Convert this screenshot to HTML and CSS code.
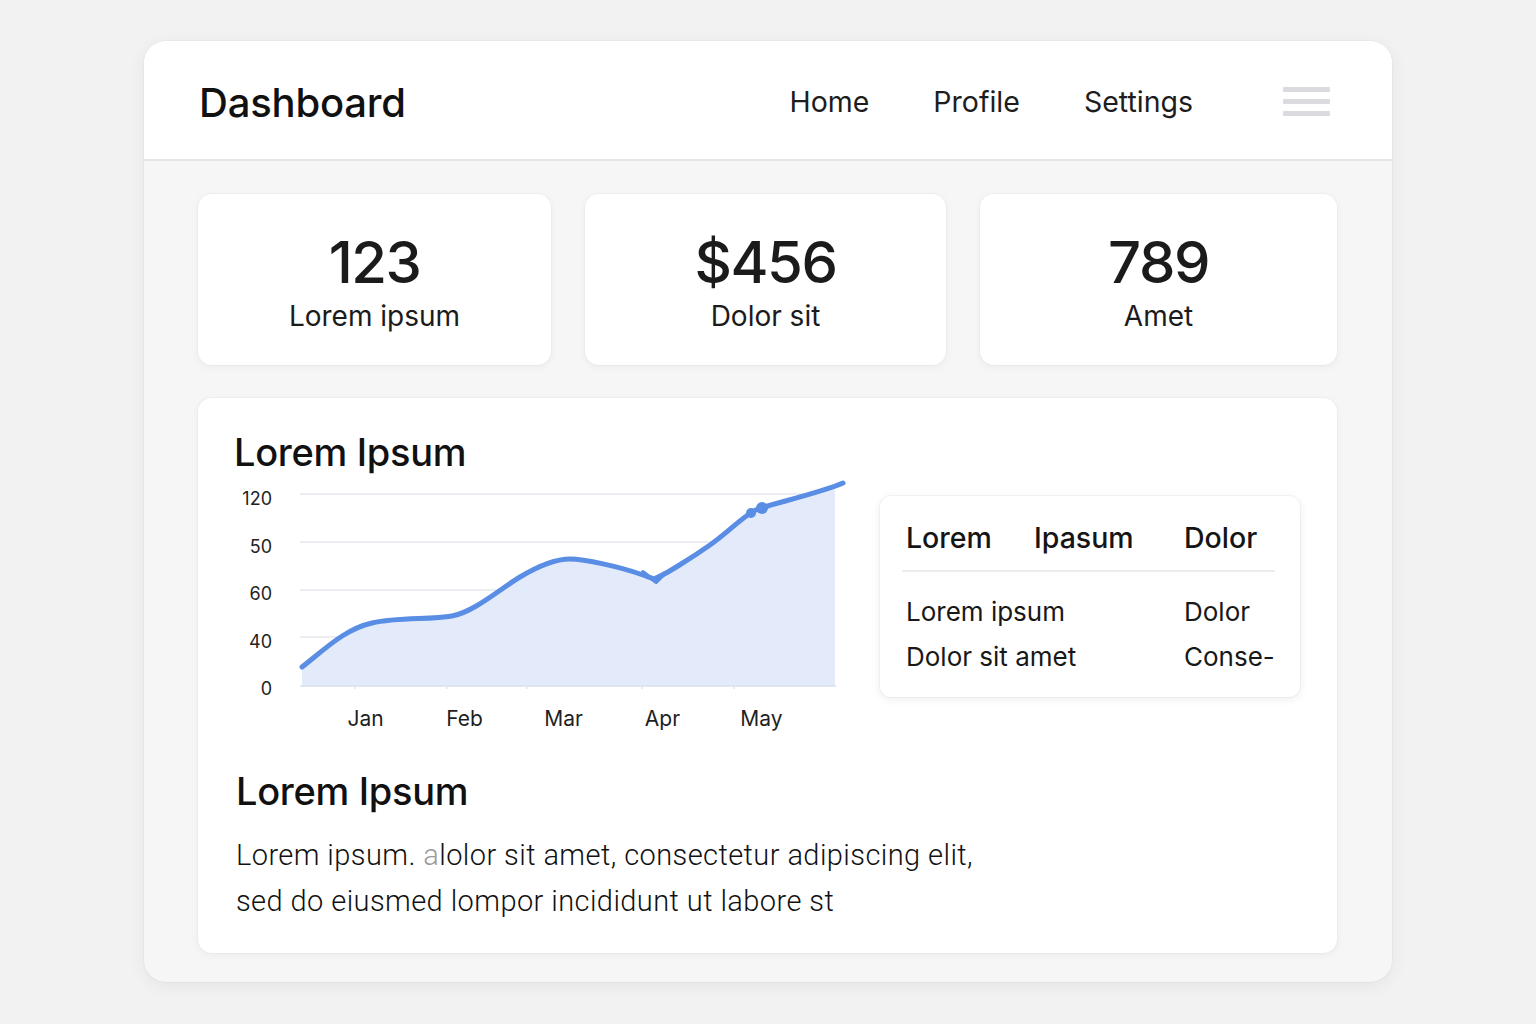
FILE: index.html
```html
<!DOCTYPE html>
<html lang="en">
<head>
<meta charset="utf-8">
<title>Dashboard</title>
<link rel="stylesheet" href="styles.css">
</head>
<body>
<div class="app">
  <header class="topbar">
    <h1 class="brand">Dashboard</h1>
    <nav class="nav">
      <a class="nav-link">Home</a>
      <a class="nav-link">Profile</a>
      <a class="nav-link">Settings</a>
      <span class="burger"><i></i><i></i><i></i></span>
    </nav>
  </header>
  <main class="content">
    <section class="stats">
      <div class="stat"><div class="stat-num">123</div><div class="stat-label">Lorem ipsum</div></div>
      <div class="stat"><div class="stat-num">$456</div><div class="stat-label">Dolor sit</div></div>
      <div class="stat"><div class="stat-num">789</div><div class="stat-label">Amet</div></div>
    </section>
    <section class="panel">
      <div class="panel-top">
        <div class="chart-block">
          <h2 class="panel-title">Lorem Ipsum</h2>
          <div class="chart">
            <div class="y-axis">
              <span>120</span><span>50</span><span>60</span><span>40</span><span>0</span>
            </div>
            <div class="plot">
              <svg class="plot-svg" width="552" height="212" viewBox="296 478 552 212">
                <g stroke="#e4e7ee" stroke-width="1.5">
                  <line x1="300" y1="495" x2="835" y2="495"/>
                  <line x1="300" y1="543" x2="835" y2="543"/>
                  <line x1="300" y1="591" x2="835" y2="591"/>
                  <line x1="300" y1="638" x2="835" y2="638"/>
                </g>
                <path d="M302,668 C325,650 345,630 372,624 S430,621 452,617 S500,590 520,578 S555,560 570,560 S620,568 640,575 S652,580 658,578 S690,560 710,546 S745,515 758,510 S820,494 843,484 L835,486 L835,687 L302,687 Z" fill="#e3ebfb"/>
                <line x1="300" y1="687" x2="836" y2="687" stroke="#d9e0ee" stroke-width="1.5"/>
                <g stroke="#e2e6ee" stroke-width="1.5">
                  <line x1="355" y1="687" x2="355" y2="691"/>
                  <line x1="447" y1="687" x2="447" y2="691"/>
                  <line x1="527" y1="687" x2="527" y2="691"/>
                  <line x1="642" y1="687" x2="642" y2="691"/>
                  <line x1="734" y1="687" x2="734" y2="691"/>
                </g>
                <path d="M302,668 C325,650 345,630 372,624 S430,621 452,617 S500,590 520,578 S555,560 570,560 S620,568 640,575 S652,580 658,578 S690,560 710,546 S745,515 758,510 S820,494 843,484" fill="none" stroke="#5a8de4" stroke-width="5" stroke-linecap="round" stroke-linejoin="round"/>
                <circle cx="762" cy="509" r="6" fill="#5a8de4"/>
                <circle cx="751" cy="514" r="5" fill="#5a8de4"/>
                <path d="M643,573 L656,583 L665,574" fill="none" stroke="#5a8de4" stroke-width="4" stroke-linecap="round" stroke-linejoin="round"/>
              </svg>
              <div class="x-axis">
                <span>Jan</span><span>Feb</span><span>Mar</span><span>Apr</span><span>May</span>
              </div>
            </div>
          </div>
        </div>
        <div class="table-card">
          <div class="t-head">
            <span>Lorem</span><span>Ipasum</span><span>Dolor</span>
          </div>
          <div class="t-row"><span class="t-wide">Lorem ipsum</span><span>Dolor</span></div>
          <div class="t-row"><span class="t-wide">Dolor sit amet</span><span>Conse-</span></div>
        </div>
      </div>
      <h2 class="panel-title second">Lorem Ipsum</h2>
      <p class="body-text">Lorem ipsum. <span class="faint">a</span>lolor sit amet, consectetur adipiscing elit,<br>sed do eiusmed lompor incididunt ut labore st</p>
    </section>
  </main>
</div>
</body>
</html>
```

FILE: styles.css
```css
* { box-sizing: border-box; }
html, body { margin: 0; padding: 0; }
body {
  background: #f2f2f3;
  font-family: Inter, "Noto Sans", "Liberation Sans", sans-serif;
  color: #161616;
  width: 1536px;
  height: 1024px;
  overflow: hidden;
}
.app {
  width: 1248px;
  height: 941px;
  margin: 41px auto 0;
  background: #f6f6f7;
  border-radius: 22px;
  box-shadow: 0 4px 18px rgba(0,0,0,0.06), 0 0 0 1px rgba(0,0,0,0.025);
  overflow: hidden;
  display: flex;
  flex-direction: column;
}
.topbar {
  height: 120px;
  flex: none;
  background: #fff;
  border-bottom: 2px solid #e6e6e8;
  display: flex;
  align-items: center;
  justify-content: space-between;
  padding: 0 62px 0 55px;
}
.brand {
  margin: 0;
  font-size: 40px;
  font-weight: 500;
  letter-spacing: -0.2px;
  color: #111;
  padding-top: 5px;
}
.nav {
  display: flex;
  align-items: center;
}
.nav-link {
  font-size: 28.5px;
  color: #1d1d1d;
  margin-right: 64px;
  padding-top: 2px;
}
.nav-link:nth-child(3) { margin-right: 90px; }
.burger {
  display: flex;
  flex-direction: column;
  gap: 7px;
  width: 47px;
  margin-top: 2px;
}
.burger i {
  display: block;
  height: 5px;
  background: #dadadf;
  border-radius: 1px;
}
.content {
  flex: 1;
  padding: 33px 55px 29px 54px;
  display: flex;
  flex-direction: column;
  gap: 33px;
}
.stats {
  display: grid;
  grid-template-columns: 353px 361px 357px;
  gap: 34px;
}
.stat {
  height: 171px;
  background: #fff;
  border-radius: 14px;
  box-shadow: 0 2px 8px rgba(0,0,0,0.05), 0 0 0 1px rgba(0,0,0,0.02);
  display: flex;
  flex-direction: column;
  align-items: center;
  padding-top: 33px;
}
.stat-num {
  font-size: 58px;
  line-height: 70px;
  font-weight: 500;
  letter-spacing: -1.5px;
  color: #1b1b1b;
}
.stat-label {
  font-size: 28px;
  line-height: 38px;
  color: #1b1b1b;
  margin-top: 0;
}
.panel {
  flex: 1;
  background: #fff;
  border-radius: 14px;
  box-shadow: 0 2px 8px rgba(0,0,0,0.05), 0 0 0 1px rgba(0,0,0,0.02);
  padding: 31px 36px 0 36px;
}
.panel-top {
  display: flex;
  align-items: flex-start;
}
.chart-block { width: 614px; }
.panel-title {
  margin: 0;
  font-size: 38px;
  line-height: 46px;
  font-weight: 500;
  letter-spacing: -0.3px;
  color: #111;
}
.chart {
  display: flex;
  margin-top: 2px;
}
.y-axis {
  width: 38px;
  height: 222px;
  padding-top: 12px;
  display: flex;
  flex-direction: column;
  justify-content: space-between;
  align-items: flex-end;
  font-size: 18px;
  line-height: 20px;
  color: #222;
}
.plot { margin-left: 24px; }
.plot-svg { display: block; }
.x-axis {
  display: grid;
  grid-template-columns: repeat(5, 99px);
  padding-left: 20px;
  margin-top: 18px;
  font-size: 21px;
  line-height: 24px;
  color: #1f1f1f;
}
.x-axis span { text-align: center; }
.table-card {
  margin-left: 32px;
  margin-top: 67px;
  width: 420px;
  height: 201px;
  background: #fff;
  border-radius: 11px;
  box-shadow: 0 2px 10px rgba(0,0,0,0.08), 0 0 0 1px rgba(0,0,0,0.03);
  padding: 22px 25px 0 22px;
}
.t-head {
  display: grid;
  grid-template-columns: 128px 150px auto;
  font-size: 28.5px;
  line-height: 40px;
  font-weight: 500;
  color: #151515;
  padding: 0 0 12px 4px;
  border-bottom: 2px solid #ececee;
}
.t-row {
  display: grid;
  grid-template-columns: 278px auto;
  font-size: 26px;
  line-height: 45px;
  color: #181818;
  padding-left: 4px;
}
.t-head + .t-row { margin-top: 17px; }
.panel-title.second {
  margin-top: 37px;
  margin-left: 2px;
}
.body-text {
  margin: 18px 0 0 2px;
  font-family: Roboto, "Liberation Sans", sans-serif;
  font-size: 29px;
  font-weight: 300;
  line-height: 46px;
  letter-spacing: 0.42px;
  color: #111;
}
.faint { color: #9a9a9a; }
```
